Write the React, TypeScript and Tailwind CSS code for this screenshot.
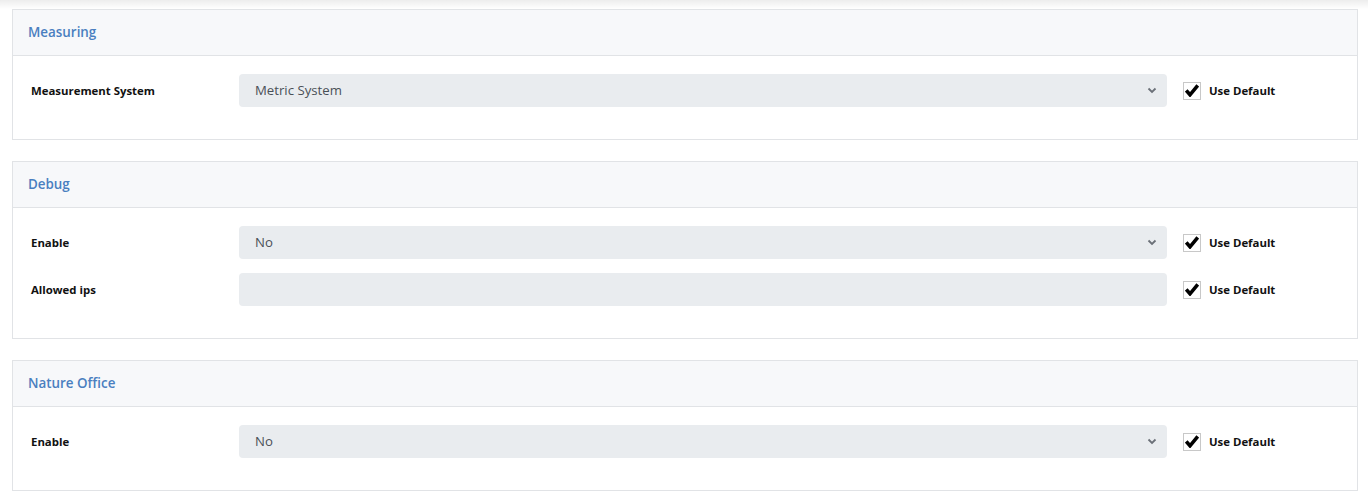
const sections = [
  {
    title: "Measuring",
    rows: [{ label: "Measurement System", type: "select", value: "Metric System" }],
  },
  {
    title: "Debug",
    rows: [
      { label: "Enable", type: "select", value: "No" },
      { label: "Allowed ips", type: "input", value: "" },
    ],
  },
  {
    title: "Nature Office",
    rows: [{ label: "Enable", type: "select", value: "No" }],
  },
];

function Checkbox() {
  return (
    <span className="flex h-[18px] w-[18px] items-center justify-center border border-[#c8c8c8] bg-white">
      <svg width="14" height="13" viewBox="0 0 14 13">
        <path d="M1.2 6.5 L5 10.8 L12.8 1.5" fill="none" stroke="#000" strokeWidth="3.6" />
      </svg>
    </span>
  );
}

function Row({ label, type, value }: { label: string; type: string; value: string }) {
  return (
    <div className="mb-[14px] flex items-center">
      <div className="w-[226px] pl-[18px] text-[11.4px] font-bold text-[#111]">{label}</div>
      <div className="flex h-[33px] w-[928px] items-center justify-between rounded-[4px] bg-[#e9ecef] pl-[16px] pr-[10px] text-[13.2px] text-[#495057]">
        <span>{value}</span>
        {type === "select" && (
          <svg width="10" height="7" viewBox="0 0 10 7">
            <path d="M1.5 1.5 L5 5 L8.5 1.5" fill="none" stroke="#6b7078" strokeWidth="1.8" />
          </svg>
        )}
      </div>
      <div className="ml-[16px] flex items-center gap-[8px]">
        <Checkbox />
        <span className="text-[11.4px] font-bold text-[#111]">Use Default</span>
      </div>
    </div>
  );
}

export default function App() {
  return (
    <div className="min-h-[497px] bg-white font-['Open_Sans',sans-serif]">
      <div className="h-[9px] bg-gradient-to-b from-[#ededed] to-white" />
      <div className="ml-[12px] mr-[10px] flex flex-col gap-[21px]">
        {sections.map((s) => (
          <div key={s.title} className="border border-[#e1e3e6] bg-white">
            {/* header */}
            <div className="flex h-[46px] items-center border-b border-[#e1e3e6] bg-[#f7f8fa] pl-[15px] text-[13.4px] font-semibold text-[#4a7fc0]">
              {s.title}
            </div>
            {/* rows */}
            <div className="pt-[18px] pb-[18px]">
              {s.rows.map((r, i) => (
                <Row key={i} {...r} />
              ))}
            </div>
          </div>
        ))}
      </div>
    </div>
  );
}
